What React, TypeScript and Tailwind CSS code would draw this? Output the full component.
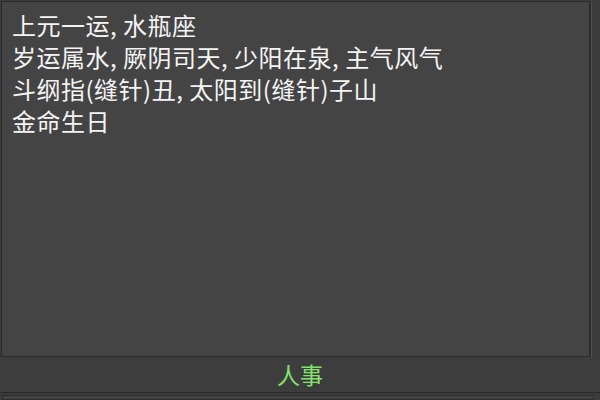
const lines = [
  '上元一运, 水瓶座',
  '岁运属水, 厥阴司天, 少阳在泉, 主气风气',
  '斗纲指(缝针)丑, 太阳到(缝针)子山',
  '金命生日',
];

const App = () => {
  return (
    <div
      className="w-[600px] h-[400px] bg-[#3b3b3b] overflow-hidden flex flex-col"
      style={{ fontFamily: '"Noto Sans CJK SC", "Noto Sans", sans-serif' }}
    >
      {/* Info panel */}
      <div className="h-[356px] shrink-0 ml-[1px] mr-[9px] mt-[1px] border border-[#2c2c2c] border-r-[2px] bg-[#444444] pl-[10px] pt-[7px] shadow-[1px_0_0_#505050]">
        {lines.map((l) => (
          <div key={l} className="text-[24px] tracking-[0.5px] leading-[32px] text-[#f4f4f4] whitespace-nowrap">
            {l}
          </div>
        ))}
      </div>

      {/* Section header */}
      <div className="h-[36px] shrink-0 flex items-center justify-center bg-[#3d3d3d] border-b border-[#2a2a2a]">
        <span className="text-[23px] leading-none text-[#84e26b]">人事</span>
      </div>

      {/* Next panel */}
      <div className="flex-1 ml-[2px] mr-[6px] mt-[2px] border border-[#2c2c2c] bg-[#434343]" />
    </div>
  );
};

export default App;
